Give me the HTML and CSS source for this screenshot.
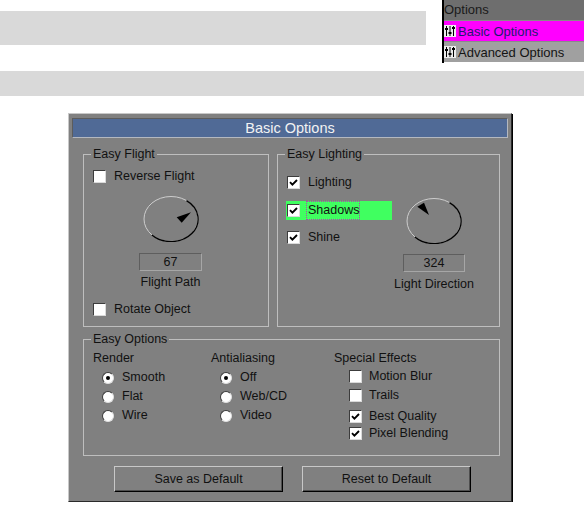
FILE: index.html
```html
<!DOCTYPE html>
<html>
<head>
<meta charset="utf-8">
<link rel="stylesheet" href="styles.css">
</head>
<body>
<div class="top-row">
  <div class="bar bar-1"></div>
  <div class="panel">
    <div class="panel-head">Options</div>
    <div class="panel-item active">
      <svg class="item-icon" width="12" height="12" viewBox="0 0 12 12"><rect width="12" height="12" fill="#ececec"/><path d="M2.5 1v10M6 1v10M9.5 1v10" stroke="#000" stroke-width="1"/><path d="M1 4h3M4.5 8h3M8 3h3" stroke="#000" stroke-width="2"/></svg>
      Basic Options
    </div>
    <div class="panel-item">
      <svg class="item-icon" width="12" height="12" viewBox="0 0 12 12"><rect width="12" height="12" fill="#ececec"/><path d="M2.5 1v10M6 1v10M9.5 1v10" stroke="#000" stroke-width="1"/><path d="M1 4h3M4.5 8h3M8 3h3" stroke="#000" stroke-width="2"/></svg>
      Advanced Options
    </div>
  </div>
</div>
<div class="bar bar-2"></div>

<div class="window">
  <div class="titlebar">Basic Options</div>
  <div class="group-row">
    <div class="group group-flight">
      <div class="legend">Easy Flight</div>
      <div class="check-row flight-first">
        <span class="cb"></span><span class="lbl">Reverse Flight</span>
      </div>
      <div class="dial-wrap flight-dial">
        <svg class="dial" width="56" height="46" viewBox="0 0 56 46">
          <ellipse cx="28" cy="23" rx="27" ry="22.5" fill="none" stroke="#cdcdcd" stroke-width="1"/>
          <path d="M43.5 4.6 A27 22.5 0 1 1 8.9 38.9" fill="none" stroke="#000" stroke-width="1.3"/>
          <polygon points="48,16.3 33.7,21.3 38.7,26.7" fill="#000"/>
        </svg>
        <div class="value value-flight">67</div>
        <div class="dial-label">Flight Path</div>
      </div>
      <div class="check-row flight-last">
        <span class="cb"></span><span class="lbl">Rotate Object</span>
      </div>
    </div>

    <div class="group group-light">
      <div class="legend">Easy Lighting</div>
      <div class="light-body">
        <div class="light-col">
          <div class="light-row row-lighting">
            <span class="cb"><svg class="tick" width="9" height="9" viewBox="0 0 9 9"><path d="M1 4.2 L3.4 6.6 L8 2" fill="none" stroke="#000" stroke-width="1.9"/></svg></span><span class="lbl">Lighting</span>
          </div>
          <div class="light-row row-shadows">
            <span class="cb"><svg class="tick" width="9" height="9" viewBox="0 0 9 9"><path d="M1 4.2 L3.4 6.6 L8 2" fill="none" stroke="#000" stroke-width="1.9"/></svg></span><span class="focus-lbl">Shadows</span>
          </div>
          <div class="light-row row-shine">
            <span class="cb"><svg class="tick" width="9" height="9" viewBox="0 0 9 9"><path d="M1 4.2 L3.4 6.6 L8 2" fill="none" stroke="#000" stroke-width="1.9"/></svg></span><span class="lbl">Shine</span>
          </div>
        </div>
        <div class="dial-wrap light-dial">
          <svg class="dial" width="56" height="46" viewBox="0 0 56 46">
            <ellipse cx="28" cy="23" rx="27" ry="22.5" fill="none" stroke="#cdcdcd" stroke-width="1"/>
            <path d="M43.5 4.6 A27 22.5 0 1 1 8.9 38.9" fill="none" stroke="#000" stroke-width="1.3"/>
            <polygon points="11.3,8.7 18,4.7 23,17" fill="#000"/>
          </svg>
          <div class="value value-light">324</div>
          <div class="dial-label label-light">Light Direction</div>
        </div>
      </div>
    </div>
  </div>

  <div class="group group-options">
    <div class="legend">Easy Options</div>
    <div class="opt-grid">
      <div class="opt-col">
        <div class="col-head">Render</div>
        <div class="radio-row"><span class="radio on"></span><span class="lbl">Smooth</span></div>
        <div class="radio-row"><span class="radio"></span><span class="lbl">Flat</span></div>
        <div class="radio-row"><span class="radio"></span><span class="lbl">Wire</span></div>
      </div>
      <div class="opt-col">
        <div class="col-head">Antialiasing</div>
        <div class="radio-row"><span class="radio on"></span><span class="lbl">Off</span></div>
        <div class="radio-row"><span class="radio"></span><span class="lbl">Web/CD</span></div>
        <div class="radio-row"><span class="radio"></span><span class="lbl">Video</span></div>
      </div>
      <div class="opt-col">
        <div class="col-head head-fx">Special Effects</div>
        <div class="fx-row fx-1"><span class="cb"></span><span class="lbl fx-lbl">Motion Blur</span></div>
        <div class="fx-row fx-2"><span class="cb"></span><span class="lbl fx-lbl">Trails</span></div>
        <div class="fx-row fx-3"><span class="cb"><svg class="tick" width="9" height="9" viewBox="0 0 9 9"><path d="M1 4.2 L3.4 6.6 L8 2" fill="none" stroke="#000" stroke-width="1.9"/></svg></span><span class="lbl fx-lbl">Best Quality</span></div>
        <div class="fx-row fx-4"><span class="cb"><svg class="tick" width="9" height="9" viewBox="0 0 9 9"><path d="M1 4.2 L3.4 6.6 L8 2" fill="none" stroke="#000" stroke-width="1.9"/></svg></span><span class="lbl fx-lbl">Pixel Blending</span></div>
      </div>
    </div>
  </div>

  <div class="btn-row">
    <button class="btn">Save as Default</button>
    <button class="btn">Reset to Default</button>
  </div>
</div>
</body>
</html>
```

FILE: styles.css
```css
body {
  margin: 0;
  background: #ffffff;
  font-family: "Liberation Sans", Arial, sans-serif;
}

.top-row {
  display: flex;
  align-items: flex-start;
  height: 63px;
}

.bar {
  background: #d9d9d9;
}

.bar-1 {
  width: 426px;
  height: 34px;
  margin-top: 11px;
}

.bar-2 {
  height: 25px;
  margin-top: 8px;
}

.panel {
  margin-left: 16px;
  width: 142px;
  height: 63px;
  box-sizing: border-box;
  border-left: 2px solid #000;
  font-size: 13px;
}

.panel-head {
  height: 20px;
  line-height: 20px;
  background: #6e6e6e;
  color: #1a1a1a;
}

.panel-item {
  display: flex;
  align-items: center;
  height: 20px;
  border-top: 1px solid #8a8a8a;
  background: #a0a0a0;
  color: #141414;
}

.panel-item.active {
  background: #ff00ff;
  color: #1c1c70;
}

.item-icon {
  flex: none;
  margin: 0 2px 0 0;
}

.window {
  margin: 17px 0 0 68px;
  width: 444px;
  height: 389px;
  box-sizing: border-box;
  background: #808080;
  border: 1px solid;
  border-color: #c8c8c8 #2a2a2a #2a2a2a #c8c8c8;
  box-shadow: 1px 1px 0 #000;
  padding: 4px 3px;
  font-size: 12.5px;
  color: #111;
}

.titlebar {
  height: 20px;
  box-sizing: border-box;
  background: #506a96;
  border: 1px solid;
  border-color: #5c5c5c #b4b8c0 #b4b8c0 #5c5c5c;
  color: #f2f2f2;
  font-size: 14.5px;
  line-height: 18px;
  text-align: center;
}

.group-row {
  display: flex;
  gap: 8px;
  margin: 16px 0 0 11px;
}

.group {
  box-sizing: border-box;
  border: 1px solid #bebebe;
}

.legend {
  width: fit-content;
  margin: -8px 0 0 7px;
  padding: 0 2px;
  background: #808080;
  line-height: 15px;
  height: 15px;
}

.group-flight {
  width: 186px;
  height: 173px;
}

.group-light {
  width: 223px;
  height: 173px;
}

.check-row {
  display: flex;
  align-items: center;
  height: 15px;
  padding-left: 9px;
}

.flight-first {
  margin-top: 7px;
}

.flight-last {
  margin-top: 12px;
}

.cb {
  flex: none;
  width: 13px;
  height: 13px;
  box-sizing: border-box;
  background: #fff;
  border: 1px solid;
  border-color: #3c3c3c #dadada #dadada #3c3c3c;
  display: flex;
  align-items: center;
  justify-content: center;
}

.tick {
  display: block;
}

.lbl {
  margin-left: 8px;
  line-height: 15px;
  white-space: nowrap;
}

.dial-wrap {
  display: flex;
  flex-direction: column;
  align-items: center;
}

.flight-dial {
  width: 63px;
  margin: 12px 0 0 55px;
}

.dial {
  display: block;
  flex: none;
}

.value {
  box-sizing: border-box;
  height: 18px;
  line-height: 16px;
  text-align: center;
  border: 1px solid;
  border-color: #5e5e5e #a6a6a6 #a6a6a6 #5e5e5e;
}

.value-flight {
  width: 63px;
  margin-top: 11px;
}

.dial-label {
  margin-top: 4px;
  line-height: 15px;
  white-space: nowrap;
}

.light-body {
  display: flex;
  padding-left: 8px;
}

.light-col {
  width: 106px;
  flex: none;
}

.light-row {
  display: flex;
  align-items: center;
  box-sizing: border-box;
  width: 106px;
  height: 15px;
  padding-left: 1px;
}

.row-lighting {
  margin-top: 13px;
}

.row-shadows {
  height: 19px;
  margin-top: 11px;
  background: #40ff60;
}

.row-shine {
  margin-top: 10px;
}

.focus-lbl {
  margin-left: 6px;
  box-sizing: border-box;
  height: 19px;
  line-height: 17px;
  padding-left: 1px;
  border: 1px dotted #b040b0;
  white-space: nowrap;
}

.light-dial {
  width: 62px;
  margin: 36px 0 0 11px;
}

.value-light {
  width: 62px;
  margin-top: 10px;
}

.label-light {
  margin-top: 5px;
}

.group-options {
  width: 417px;
  height: 117px;
  margin: 12px 0 0 11px;
}

.opt-grid {
  display: grid;
  grid-template-columns: 118px 123px 1fr;
  padding-left: 9px;
  margin-top: 4px;
}

.col-head {
  height: 15px;
  line-height: 15px;
  margin-bottom: 2px;
  white-space: nowrap;
}

.head-fx {
  margin-bottom: 0;
}

.radio-row {
  display: flex;
  align-items: center;
  height: 19px;
  padding-left: 9px;
}

.radio {
  flex: none;
  width: 12px;
  height: 12px;
  box-sizing: border-box;
  border-radius: 50%;
  background: #fff;
  border: 1px solid;
  border-color: #3c3c3c #e0e0e0 #e0e0e0 #3c3c3c;
  display: flex;
  align-items: center;
  justify-content: center;
}

.radio.on::after {
  content: "";
  width: 4px;
  height: 4px;
  border-radius: 50%;
  background: #000;
}

.fx-row {
  display: flex;
  align-items: center;
  height: 15px;
  padding-left: 15px;
}

.fx-lbl {
  margin-left: 7px;
}

.fx-1 { margin-top: 3px; }
.fx-2 { margin-top: 4px; }
.fx-3 { margin-top: 6px; }
.fx-4 { margin-top: 2px; }

.btn-row {
  display: flex;
  gap: 19px;
  margin: 10px 0 0 42px;
}

.btn {
  width: 169px;
  height: 26px;
  box-sizing: border-box;
  padding: 0;
  background: #808080;
  border: 1px solid;
  border-color: #c8c8c8 #000 #000 #c8c8c8;
  box-shadow: inset -1px -1px 0 #4e4e4e;
  font-family: inherit;
  font-size: 12.5px;
  line-height: 24px;
  color: #111;
  text-align: center;
}
```
